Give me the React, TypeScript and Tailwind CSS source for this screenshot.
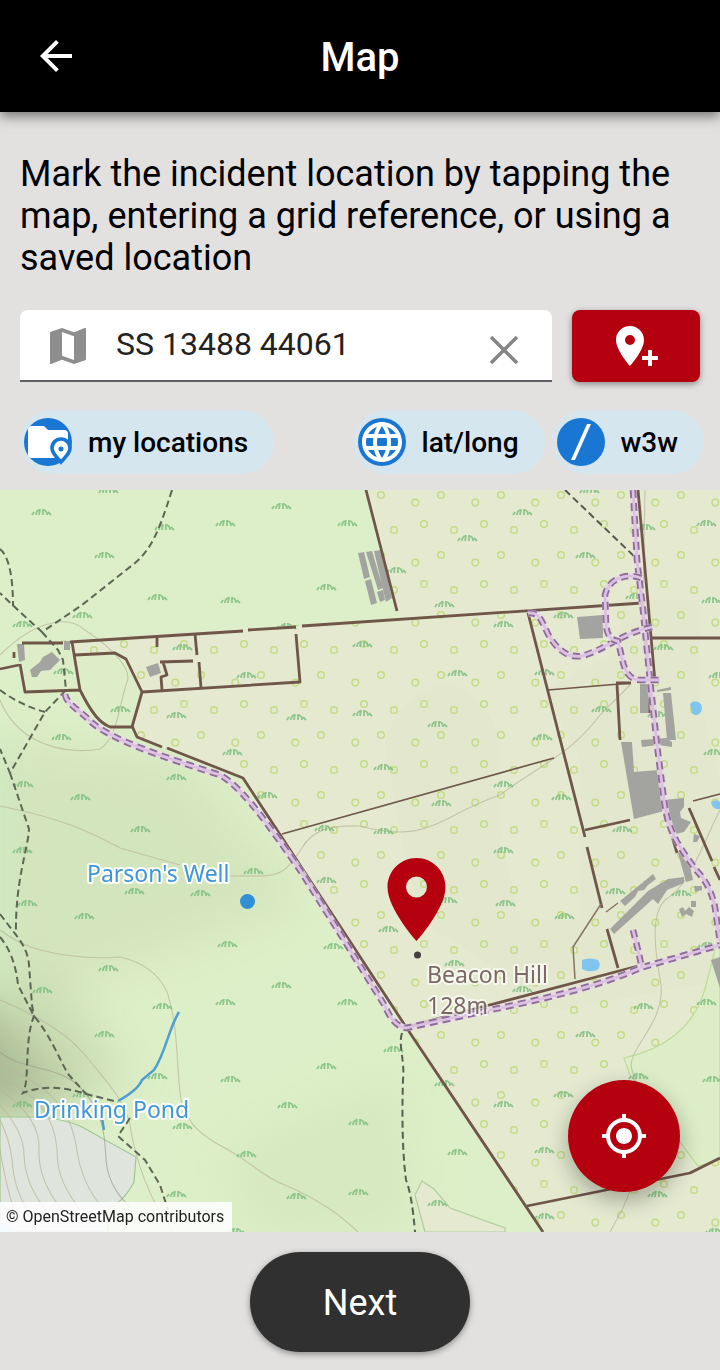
import { useState } from 'react';
import { MdArrowBack, MdLanguage, MdMap, MdMyLocation } from 'react-icons/md';

const wall = { fill: 'none', stroke: '#6f5549', strokeWidth: 2.8, strokeLinejoin: 'round' as const };
const contour = { fill: 'none', stroke: '#b9b59b', strokeWidth: 1.1, opacity: 0.7 };
const footpath = { fill: 'none', stroke: '#5c6652', strokeWidth: 2, strokeDasharray: '7 4' };

const grass = [
  [41, 512], [164, 527], [225, 523], [281, 506], [347, 523], [104, 555], [157, 597], [230, 600], [326, 587], [82, 615],
  [22, 624], [286, 626], [182, 647], [63, 671], [246, 675], [120, 709], [176, 715], [296, 717], [61, 737], [108, 490],
  [522, 512], [467, 538], [645, 527], [706, 523], [585, 555], [396, 570], [444, 604], [635, 596], [711, 600], [563, 615],
  [503, 624], [362, 644], [663, 647], [457, 673], [544, 672], [362, 713], [437, 724], [601, 709], [542, 737], [657, 714],
  [589, 490], [718, 675], [232, 752], [176, 777], [23, 784], [80, 797], [267, 795], [140, 829], [324, 828], [22, 850],
  [253, 871], [326, 880], [134, 891], [200, 893], [27, 903], [84, 916], [227, 944], [333, 946], [108, 968], [281, 985],
  [42, 990], [383, 767], [713, 752], [503, 784], [441, 803], [561, 797], [383, 831], [622, 829], [503, 850], [615, 891],
  [681, 893], [447, 900], [505, 903], [564, 916], [388, 929], [707, 945], [454, 963], [522, 989], [162, 1006], [225, 1002],
  [347, 1002], [104, 1034], [157, 1076], [230, 1079], [326, 1066], [82, 1094], [22, 1104], [287, 1105], [182, 1126],
  [246, 1154], [176, 1194], [296, 1196], [235, 1231], [358, 1122], [358, 1192], [393, 1049], [643, 1006], [706, 1002],
  [585, 1034], [444, 1083], [638, 1076], [712, 1079], [503, 1104], [563, 1094], [457, 1152], [544, 1150], [437, 1203],
  [657, 1194], [544, 1216], [714, 1231],
];

const orchard =
  'M366 490L398 611L400 618L22 643L25 692L80 690C92 714 100 723 110 727H132L137 737L243 778L406 1027L543 1232H720V490Z';

const tracks = [
  'M65 694C66 704 80 710 91 722C112 740 160 756 220 775C245 788 280 842 300 870L344 940L385 1006Q393 1026 406 1028L490 1010C540 1000 600 986 640 968L720 945',
  'M633 490L637 560L643 610L650 680L657 745L664 800C668 835 682 850 696 870C706 880 714 895 716 915L720 942',
  'M528 613C540 612 542 622 548 634C558 652 570 658 582 656C605 650 620 634 652 627',
  'M641 578C625 572 608 580 605 595L606 624Q607 640 618 641L622 658Q626 680 640 680H660',
  'M633 930L638 950L642 968',
];

function Tracks() {
  return (
    <g fill="none" strokeLinejoin="round">
      {tracks.map((d) => (
        <g key={d}>
          <path d={d} stroke="#ead9e6" strokeWidth="7" opacity=".8" />
          <path d={d} stroke="#8f6c99" strokeWidth="6.5" strokeDasharray="8 5" />
          <path d={d} stroke="#dcc2e2" strokeWidth="2.800" />
        </g>
      ))}
    </g>
  );
}

function TerrainMap() {
  return (
    <svg
      viewBox="0 490 720 742"
      preserveAspectRatio="xMidYMid slice"
      className="absolute inset-0 h-full w-full"
      role="img"
      aria-label="Map around Beacon Hill"
    >
      <defs>
        <pattern id="trees" x="371" y="485" width="60" height="60" patternUnits="userSpaceOnUse">
          <g fill="none" stroke="#c3dc84" strokeWidth="1.5">
            <circle cx="10" cy="10" r="3.3" />
            <circle cx="44.3" cy="17.6" r="3.3" />
            <circle cx="53" cy="39" r="3.3" />
            <circle cx="23" cy="45" r="3.3" />
          </g>
        </pattern>
        <filter id="soft" x="-50%" y="-50%" width="200%" height="200%">
          <feGaussianBlur stdDeviation="22" />
        </filter>
        <filter id="tile">
          <feGaussianBlur stdDeviation="0.500" />
        </filter>
        <g id="tuft" fill="none" stroke="#7fbf80" strokeWidth="1.8">
          <path d="M-9 3L-7 0M-5 3Q-5 -1 -2 -2M-2 3L-1 -3M2 3V-3M3 -2Q6 -1 6 3M7 0L10 3" />
        </g>
      </defs>

      <g filter="url(#tile)">
        <rect x="-10" y="480" width="740" height="762" fill="#ddefc8" />
        <g filter="url(#soft)">
          <path d="M-30 740L180 760L300 900L250 920L60 990L-30 960Z" fill="#d1e2ba" opacity=".8" />
          <path d="M-60 1000L10 1010L85 1100L-60 1130Z" fill="#9dac88" opacity=".8" />
          <path d="M-60 960L60 980L130 1080L60 1100Z" fill="#c3d5ad" opacity=".7" />
          <path d="M230 1150L400 1080L410 1232H250Z" fill="#d5e8c0" />
          <path d="M-20 730H0V990H-20Z" fill="#c9ecc4" />
        </g>
        <path d={orchard} fill="#e4e9d0" />
        <path
          d="M385 742Q400 690 450 684Q490 700 500 742V830L520 920H580V760L545 690L620 650V600H700V700L720 780V980L560 1010L420 920L400 830Z"
          fill="#dfe5c9"
          opacity=".45"
        />
        <path d={orchard} fill="url(#trees)" />
        <path
          d="M75 655L115 653L126 659L142 692L132 726H110Q95 720 80 690ZM22 643H72L80 690L25 692Z"
          fill="#dcedc7"
        />
        <path
          d="M624 1058C660 1050 695 1030 706 985L720 930V1160L698 1166L630 1075Z"
          fill="#dcedc7"
          stroke="#bedb98"
          strokeWidth="1.2"
        />
        <path
          d="M425 1232L415 1195L422 1181L434 1189L450 1208L505 1228V1232Z"
          fill="#e4e9d0"
          stroke="#b2cea0"
          strokeWidth="1.2"
        />
        <path
          d="M0 1117H38Q65 1119 82 1127L136 1157L134 1182Q125 1200 108 1210V1232H0Z"
          fill="#dfe4dc"
          stroke="#9fc796"
          strokeWidth="1.2"
        />
        <path d="M0 1222L18 1232H0Z" fill="#b9dcec" />

        <g {...contour}>
          <path d="M0 655C30 625 65 612 85 630C115 650 132 670 127 682C120 700 118 738 100 749C75 754 20 750 0 700" />
          <path d="M0 806C70 820 95 835 120 848L180 865M230 876H260C285 876 290 865 302 848C312 830 330 825 360 826C430 845 440 815 500 795C540 765 570 755 600 715L630 685" />
          <path d="M0 930Q20 945 40 950Q80 960 120 957Q155 965 167 992C180 1030 176 1080 182 1105C190 1125 200 1135 225 1148C255 1165 265 1178 285 1185C320 1200 340 1215 358 1232" />
          <path d="M0 1000Q60 1025 85 1055C105 1080 125 1100 130 1125C135 1160 150 1200 172 1232" />
          <path d="M0 1052C20 1070 55 1065 78 1085C105 1110 105 1140 106 1160C108 1185 122 1200 135 1212" stroke="#a29f8e" />
          <path d="M0 1065C50 1085 70 1110 76 1145C80 1175 90 1195 105 1210M0 1077C40 1095 55 1120 57 1150C57 1180 70 1195 80 1210M0 1090C30 1110 40 1130 39 1150C38 1175 50 1195 62 1210M0 1105C18 1125 24 1140 24 1155C25 1180 35 1195 45 1210M0 1120Q10 1140 12 1160Q14 1190 28 1210M0 1150Q6 1185 14 1210" />
          <path d="M661 985C655 950 650 915 665 900C690 885 700 850 720 810M661 985C665 1025 625 1050 632 1070C655 1130 640 1170 622 1210L610 1232M645 490L643 600" />
        </g>

        <g opacity=".85">
          {grass.map(([x, y]) => (
            <use key={`${x}-${y}`} href="#tuft" x={x} y={y} />
          ))}
        </g>

        <g fill="#a3a49f">
          <path d="M358 553L364 552L370 577L364 579ZM366 552L372 551L383 588L378 590ZM374 551L381 550L392 598L386 602ZM365 581L371 579L377 603L371 605ZM377 592L383 590L385 600L380 602Z" />
          <path d="M577 617L603 615V638L580 639ZM17 644H24L25 660L19 662ZM64 641H70V650H64ZM146 667L158 663L161 673L150 677Z" />
          <path d="M30 670L40 662L43 657L52 652L60 660L50 670L41 671L37 677H32Z" />
          <path d="M640 684H650V713H640ZM657 690L671 687V690L657 692ZM663 693H671L676 740H667ZM641 740L666 738L672 742V747L658 745L642 747Z" />
          <path d="M621 742H632L634 772L658 770L663 800L684 798V807L680 812L681 818L691 822L684 832L672 835L664 811L634 819Z" />
          <path d="M678 853H687L693 880L686 882ZM610 929L648 891L668 879L684 877V883L667 890L658 904L653 899L614 934ZM620 901L653 874L656 879L648 885L644 890L638 891L635 897L625 906Z" />
          <path d="M679 909L683 907L685 911L689 907L694 911L692 917L686 914L682 917ZM691 901H696V907H691ZM694 886L702 886V890L695 892ZM694 834L700 836L697 842H693ZM711 960L720 957V988Z" />
        </g>
        <g fill="#7fc5f0">
          <path d="M690 704Q693 700 698 702Q704 705 701 712Q697 718 692 713ZM582 960Q590 957 598 960Q602 966 597 970Q588 973 582 969ZM711 803Q715 798 720 802V809Q713 810 711 803Z" />
        </g>

        <g {...footpath}>
          <path d="M172 490C158 535 150 550 135 563L82 605L42 632L20 612L0 593M0 549Q13 560 13 606" />
          <path d="M42 632L58 650L63 660L66 690L45 712L10 773L0 749M0 690Q20 705 45 712M10 773L29 829C28 850 15 880 16 935" />
          <path d="M0 914L16 935Q28 950 29 965L32 1005L34 1016C24 1040 30 1080 23 1093Q50 1082 86 1094L118 1102M0 937Q15 955 18 985L34 1016C50 1035 60 1060 68 1074L86 1094" />
          <path d="M130 1118L118 1136L145 1160L160 1185L168 1210" />
          <path d="M565 490L637 559" stroke="#56584d" />
          <path d="M402 1033C398 1045 405 1060 403 1080C402 1110 402 1150 406 1180Q412 1195 415 1232" stroke="#55604f" />
        </g>

        <g fill="none" stroke="#4d9dd0" strokeWidth="2.4">
          <path d="M179 1012C168 1030 166 1052 154 1070L142 1080Q138 1090 118 1101M102 1118L104 1130" />
        </g>

        <g {...wall}>
          <path d="M366 490L397 611M0 669L19 665M14 652V658M22 643H63M70 642L243 631M248 630L296 627M302 626L642 603M651 638H720" />
          <path d="M20 664L25 692L80 690M72 642L80 690C92 714 100 723 110 727H132L142 692L126 659L115 653L75 655M142 692L300 682L296 634" />
          <path d="M157 637V647M195 634L197 655M199 662L201 688M160 662L193 661M163 662L167 675L161 677L162 690" />
          <path d="M132 726L137 737L162 747M167 748L243 778L406 1027L543 1232M406 1027L638 966" />
          <path d="M528 613L585 837M587 847L602 908M585 830L630 820M642 602L649 681H637M638 490L655 682M607 929L618 968M650 682V713M616 683H631M617 684L620 740" />
          <path d="M672 836L677 853M689 808L712 861M714 867L720 880M527 1206L690 1173L720 1158" />
          <path d="M548 690L631 683M282 834L554 758M693 801L720 794" strokeWidth="1.7" />
          <path d="M601 904L573 947L575 979M606 912L618 903" stroke="#857565" strokeWidth="1.5" />
        </g>

        <Tracks />
      </g>

      <circle cx="247.500" cy="901.500" r="7.500" fill="#308fd5" />
      <circle cx="417.500" cy="955" r="3.500" fill="#453f3c" />
      <g
        fontFamily="'Noto Sans', 'Open Sans', sans-serif"
        fontSize="23"
        stroke="#fffffff0"
        strokeWidth="4"
        strokeLinejoin="round"
        paintOrder="stroke"
      >
        <text x="87" y="882" fill="#4095d8">
          Parson's Well
        </text>
        <text x="34" y="1118" fill="#4095d8">
          Drinking Pond
        </text>
        <g fill="#7c6865" strokeOpacity=".7">
          <text x="427" y="983">
            Beacon Hill
          </text>
          <text x="427" y="1014">
            128m
          </text>
        </g>
      </g>

      <path
        fill="#b5000f"
        fillRule="evenodd"
        d="M416.500 858C400.400 858 387.500 871 387.500 887C387.500 909 416.500 941 416.500 941C416.500 941 445.500 909 445.500 887C445.500 871 432.600 858 416.500 858ZM416.500 876.500A10.500 10.500 0 1 1 416.500 897.500A10.500 10.500 0 1 1 416.500 876.500Z"
      />
    </svg>
  );
}

function FolderPinIcon() {
  return (
    <svg viewBox="0 0 48 48" className="size-12" aria-hidden="true">
      <circle cx="24" cy="24" r="24" fill="#1976d2" />
      <path d="M8 8H20L24 12H40Q44 12 44 16V40H8Q4 40 4 36V12Q4 8 8 8Z" fill="#fff" />
      <path
        d="M37 44C34 40 28 36 28 30A9 9 0 0 1 46 30C46 36 40 40 37 44Z"
        fill="#fff"
        stroke="#1976d2"
        strokeWidth="3.600"
      />
      <circle cx="37" cy="31" r="2.500" fill="#1976d2" />
    </svg>
  );
}

function GlobeIcon() {
  return (
    <span className="flex size-12 items-center justify-center rounded-full bg-[#1976d2] text-white">
      <MdLanguage size={48} aria-hidden="true" />
    </span>
  );
}

function SlashIcon() {
  return (
    <svg viewBox="0 0 48 48" className="size-12" aria-hidden="true">
      <circle cx="24" cy="24" r="24" fill="#1976d2" />
      <path d="M30 6H34L18 42H14Z" fill="#fff" />
    </svg>
  );
}

function Chip({ icon, label }: { icon: React.ReactNode; label: string }) {
  return (
    <button
      type="button"
      className="flex h-16 shrink-0 items-center gap-4 rounded-full bg-[#d6e6ef] pr-[26px] pl-1 text-[28px] font-medium text-black"
    >
      {icon}
      <span className="pt-0.5">{label}</span>
    </button>
  );
}

export default function App() {
  const [gridRef, setGridRef] = useState('SS 13488 44061');

  return (
    <div className="flex min-h-screen flex-col bg-[#e2e1e0] font-[Roboto,sans-serif] text-black">
      <header className="grid h-28 shrink-0 grid-cols-[1fr_auto_1fr] items-center bg-black px-8 text-white shadow-[0_4px_12px_rgba(0,0,0,0.5)]">
        <button type="button" aria-label="Back" className="justify-self-start">
          <MdArrowBack size={48} />
        </button>
        <h1 className="pt-1 text-[40px] leading-none font-medium">Map</h1>
      </header>

      <main className="flex grow flex-col">
        <p className="px-5 pt-[41px] text-4xl leading-[42px]">
          Mark the incident location by tapping the map, entering a grid reference, or using a saved location
        </p>

        <div className="flex gap-5 px-5 pt-[31px]">
          <div className="flex h-18 min-w-0 grow items-center rounded-t-lg border-b-2 border-[#5f6063] bg-white px-6 pt-0.5">
            <MdMap size={48} className="shrink-0 text-[#8e8e8e]" aria-hidden="true" />
            <input
              aria-label="Grid reference"
              value={gridRef}
              onChange={(e) => setGridRef(e.target.value)}
              className="ml-6 h-full min-w-0 grow bg-transparent pb-1 text-[32px] text-[#222] outline-none"
            />
            <button type="button" aria-label="Clear" className="shrink-0 pt-2" onClick={() => setGridRef('')}>
              <svg viewBox="0 0 48 48" className="size-12" fill="none" stroke="#858585" strokeWidth="3.500">
                <path d="M11 11L37 37M37 11L11 37" />
              </svg>
            </button>
          </div>
          <button
            type="button"
            aria-label="Save location"
            className="flex h-18 w-32 shrink-0 items-center justify-center rounded-lg bg-[#b5000f] text-white shadow-[0_2px_6px_rgba(0,0,0,0.4)]"
          >
            <svg viewBox="0 0 24 24" className="size-12" fill="currentColor" aria-hidden="true">
              <path d="M9 11.500A2.500 2.500 0 0 0 11.500 9A2.500 2.500 0 0 0 9 6.500A2.500 2.500 0 0 0 6.500 9A2.500 2.500 0 0 0 9 11.500M9 2C12.860 2 16 5.130 16 9C16 14.250 9 22 9 22C9 22 2 14.250 2 9A7 7 0 0 1 9 2M15 17H18V14H20V17H23V19H20V22H18V19H15V17Z" />
            </svg>
          </button>
        </div>

        <div className="flex flex-wrap items-center justify-between gap-2 pt-7 pr-4 pb-4 pl-5">
          <Chip icon={<FolderPinIcon />} label="my locations" />
          <div className="flex gap-2">
            <Chip icon={<GlobeIcon />} label="lat/long" />
            <Chip icon={<SlashIcon />} label="w3w" />
          </div>
        </div>

        <section className="relative min-h-96 grow overflow-hidden">
          <TerrainMap />
          <a
            href="#copyright"
            className="absolute bottom-0 left-0 bg-white/85 px-2 py-1 pl-1.5 text-base leading-[22px] text-[#222]"
          >
            © OpenStreetMap contributors
          </a>
          <button
            type="button"
            aria-label="Use my location"
            className="absolute right-10 bottom-10 flex size-28 items-center justify-center rounded-full bg-[#b5000f] text-white shadow-[0_8px_22px_rgba(0,0,0,0.3)]"
          >
            <MdMyLocation size={48} />
          </button>
        </section>
      </main>

      <footer className="flex justify-center pt-5 pb-[18px]">
        <button
          type="button"
          className="h-25 w-55 rounded-full bg-[#303030] pt-0.5 text-4xl text-white shadow-[0_2px_6px_rgba(0,0,0,0.4)]"
        >
          Next
        </button>
      </footer>
    </div>
  );
}
